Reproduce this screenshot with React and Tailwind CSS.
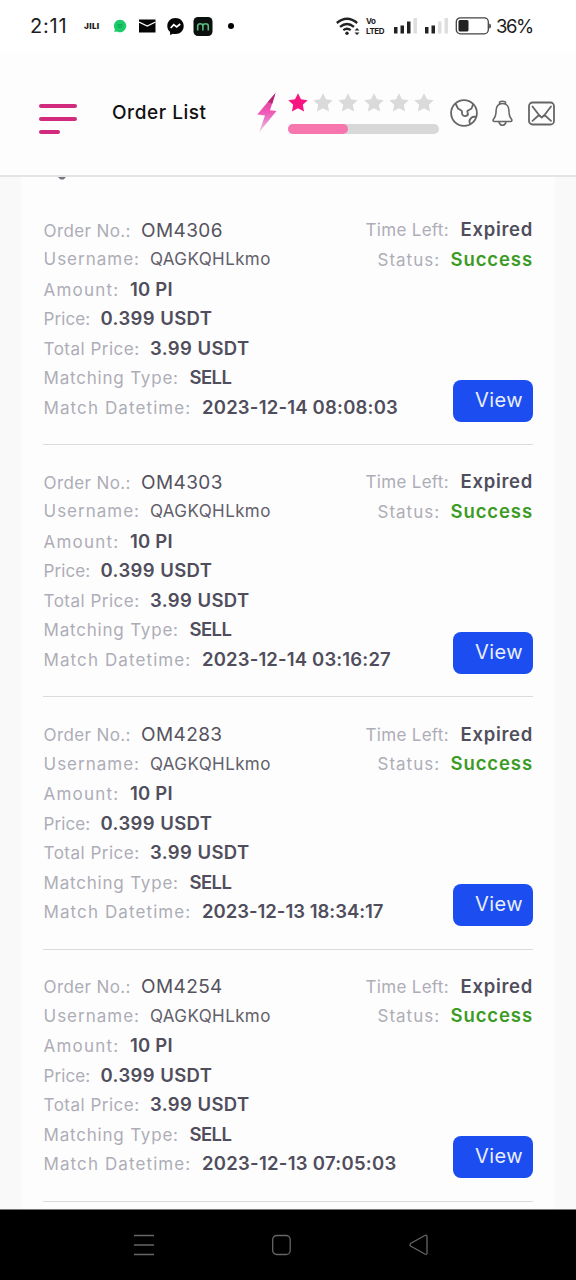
const orders = [
  { no: 'OM4306', datetime: '2023-12-14 08:08:03', dateClass: 'tracking-[0.2px]' },
  { no: 'OM4303', datetime: '2023-12-14 03:16:27', dateClass: 'tracking-[0.15px]' },
  { no: 'OM4283', datetime: '2023-12-13 18:34:17', dateClass: 'tracking-[-0.02px]' },
  { no: 'OM4254', datetime: '2023-12-13 07:05:03', dateClass: 'tracking-[0.27px]' },
];

const STAR_PATH = 'M10 .3l3 6 6.700.9-4.900 4.600 1.300 6.700-6.100-3.200-6.100 3.200 1.300-6.700L.3 7.200 7 6.300z';

function StatusBar() {
  return (
    <div className="flex h-[52px] shrink-0 items-center bg-white pl-[30px] text-[#1c1c1c]">
      <span className="w-[54px] text-[20px] leading-none tracking-[0.8px]">2:11</span>
      <span className="w-[29px] text-[8px] leading-none font-black tracking-[0.4px]">JILI</span>
      <svg width="14" height="14" viewBox="0 0 14 14" className="mr-[12px]">
        <path d="M7 .8a6.200 6.200 0 1 1-3 11.600L1.300 13l.6-2.700A6.200 6.200 0 0 1 7 .8z" fill="#1ccb68" />
        <path d="M4.300 6.200q2.700-1.200 5.400 0M4.700 8.300q2.300-.9 4.300 0" stroke="#0a9b48" fill="none" />
      </svg>
      <svg width="17" height="14" viewBox="0 0 17 14" className="mr-[11px]">
        <path d="M0 .5h16.500v13H0z" fill="#050505" />
        <path d="M0 3l8.250 4L16.500 3" stroke="#fff" strokeWidth="1.300" fill="none" />
      </svg>
      <svg width="17" height="17" viewBox="0 0 17 17" className="mr-[9px]">
        <path d="M8.500 0C3.700 0 .3 3.400.3 7.900c0 2.500 1 4.500 2.700 5.900L3.200 17l2.700-1.300c.8.200 1.700.3 2.600.3 4.800 0 8.200-3.500 8.200-8S13.300 0 8.500 0z" fill="#050505" />
        <path d="M3.700 10l3-3.400 3 2.400 3.500-3" stroke="#fff" strokeWidth="1.700" fill="none" />
      </svg>
      <svg width="20" height="19" viewBox="0 0 20 19" className="mr-[15px]">
        <rect x=".5" width="19" height="19" rx="4.500" fill="#0b0f0d" />
        <path d="M4.700 13.500V9q0-2.300 2.600-2.300T9.900 9v4.500M9.900 9q0-2.300 2.700-2.300T15.300 9v4.500" stroke="#58ba7e" strokeWidth="1.600" fill="none" />
      </svg>
      <span className="mr-[102px] size-[6px] rounded-full bg-black" />

      <svg width="25" height="19" viewBox="0 0 25 19" className="mr-[5px]">
        <g fill="none" stroke="#222" strokeWidth="2.300">
          <path d="M.8 6q10.200-8.600 20.400 0" />
          <path d="M4 9.800q7-5.700 14 0" />
          <path d="M7.300 13.200q3.700-3 7.400 0" />
        </g>
        <circle cx="11" cy="16.300" r="1.700" fill="#222" />
        <path d="M18.500 13.500l2.500-2.500 2.500 2.500zM18.500 15.500h5L21 18z" fill="#222" />
      </svg>
      <span className="mr-[9px] flex w-[18px] flex-col text-[8px] leading-[10px] font-bold tracking-[-0.4px]">
        <span>Vo</span>
        <span>LTED</span>
      </span>
      <SignalBars filled={3} />
      <SignalBars filled={2} />
      <svg width="36" height="18" viewBox="0 0 36 18" className="mr-[5px]">
        <rect x="1.300" y=".8" width="32" height="16" rx="4" fill="none" stroke="#444" strokeWidth="1.300" />
        <rect x="3.500" y="3" width="10" height="11.500" rx="1.500" fill="#222" />
        <path d="M34.200 6.500q1.800 0 1.800 2.500t-1.800 2.500z" fill="#444" />
      </svg>
      <span className="text-[18.5px] leading-none tracking-[-1.4px]">36%</span>
    </div>
  );
}

function SignalBars({ filled }) {
  return (
    <svg width="24" height="16" viewBox="0 0 24 16" className="mr-[7px]">
      {[6.5, 8, 12, 15.5].map((h, i) => (
        <rect key={h} x={i * 6.5 + 1} y={15.5 - h} width="3.500" height={h} fill={i < filled ? '#222' : '#dedede'} />
      ))}
    </svg>
  );
}

function Header() {
  return (
    <header className="flex h-[125px] shrink-0 items-start border-b-2 border-[#e4e4e4] bg-[#fdfdfd] pl-[39px]">
      <div className="mt-[52px] mr-[35px] flex w-[38px] flex-col gap-[9px]">
        <span className="h-1 rounded-full bg-[#d22b7e]" />
        <span className="h-1 rounded-full bg-[#d22b7e]" />
        <span className="h-1 w-[21px] rounded-full bg-[#d22b7e]" />
      </div>
      <h1 className="mt-[48px] w-[144px] text-[19px] leading-[26px] font-medium tracking-[0.55px] whitespace-nowrap text-[#111]">Order List</h1>

      <svg width="22" height="40" viewBox="0 0 22 40" className="mt-[41px] mr-[10px]">
        <defs>
          <linearGradient id="bolt" x1="0" y1="0" x2="0" y2="1">
            <stop offset="0" stopColor="#d0388f" />
            <stop offset=".45" stopColor="#f154b4" />
            <stop offset=".65" stopColor="#e777c4" />
            <stop offset="1" stopColor="#eed6e6" />
          </linearGradient>
        </defs>
        <path d="M19.500 0L1.200 21.500l7.800 1L3 39.500l17.500-21.500-6.500-.7z" fill="url(#bolt)" />
        <path d="M19.500 0L12 8.800l4.300 2z" fill="#b32875" />
      </svg>

      <div className="mt-[41px] mr-[11px] w-[151px]">
        <div className="flex gap-[5.200px]">
          {[0, 1, 2, 3, 4, 5].map((i) => (
            <svg key={i} width="20" height="20" viewBox="0 0 20 20" className="shrink-0">
              <path d={STAR_PATH} fill={i === 0 ? '#f71582' : '#dadada'} />
            </svg>
          ))}
        </div>
        <div className="mt-[11px] h-[10px] rounded-full bg-[#d8d8d8]">
          <div className="h-full w-[60px] rounded-full bg-[#f876ae]" />
        </div>
      </div>

      <div className="mt-[46px] flex h-[30px] items-center text-[#666]">
        <svg width="28" height="28" viewBox="0 0 28 28" fill="none" stroke="currentColor" strokeWidth="1.800" strokeLinejoin="round" className="mr-[14px]">
          <circle cx="14" cy="14" r="12.900" />
          <path d="M5.500 4.500L8 9.500l3.700 2.200.6 3.800q2.300 3 5.700.2l-.7-3.700 4.200-2.500 1.700-4.300M26.500 18q-3.500-.7-5 .7-2.500 2-2 4.300 0 1.500 1.200 2" />
        </svg>
        <svg width="21" height="27" viewBox="0 0 21 27" fill="none" stroke="currentColor" strokeWidth="1.600" strokeLinejoin="round" className="mr-[15px]">
          <path d="M7.500 4V2.600q0-1.300 3-1.300t3 1.300V4M10.500 3.500c-4.200 0-6.400 3-6.400 7 0 4.500-.5 6.300-2.500 8.500-1 1.500-.5 2.500.9 2.500h16c1.400 0 1.900-1 .9-2.500-2-2.200-2.500-4-2.500-8.500 0-4-2.200-7-6.400-7z" />
          <path d="M7 21.500q.7 3.800 3.500 3.800t3.500-3.800" />
        </svg>
        <svg width="28" height="25" viewBox="0 0 28 25" fill="none" stroke="currentColor" strokeWidth="1.800" strokeLinecap="round" strokeLinejoin="round">
          <rect x="1" y="1.500" width="25" height="22" rx="3.500" />
          <path d="M4.500 5.500L11 14l2.700 2.500L16.500 14 23 5.500M4.500 19.800L11 14M23 19.800L16.500 14" />
        </svg>
      </div>
    </header>
  );
}

function Field({ label, labelClass, value, valueClass }) {
  return (
    <div className="flex h-[29.5px] items-baseline whitespace-nowrap leading-[29.5px]">
      <span className={`shrink-0 text-[17px] text-[#adadb7] ${labelClass}`}>{label}</span>
      <span className={valueClass}>{value}</span>
    </div>
  );
}

const strong = 'text-[18.5px] font-semibold text-[#504e5c]';

function Order({ order }) {
  return (
    <article className="mb-[22.25px] flex h-[230px] border-b border-[#dcdcde]">
      <div className="w-0 flex-1 pt-[0.5px] pl-[0.5px]">
        <Field label="Order No.:" labelClass="w-[97.5px] tracking-[0.4px]" value={order.no} valueClass="text-[19px] tracking-[0.4px] text-[#55535e]" />
        <Field label="Username:" labelClass="w-[106.5px] tracking-[1px]" value="QAGKQHLkmo" valueClass="text-[17px] tracking-[0.4px] text-[#62606b]" />
        <Field label="Amount:" labelClass="w-[86.5px] tracking-[1.2px]" value="10 PI" valueClass={`${strong} tracking-[0.2px]`} />
        <Field label="Price:" labelClass="w-[57px] tracking-[0.1px]" value="0.399 USDT" valueClass={`${strong} tracking-[0.4px]`} />
        <Field label="Total Price:" labelClass="w-[106.5px] tracking-[0.5px]" value="3.99 USDT" valueClass={`${strong} tracking-[0.4px]`} />
        <Field label="Matching Type:" labelClass="w-[146px] tracking-[0.8px]" value="SELL" valueClass={`${strong} tracking-[-0.6px]`} />
        <Field label="Match Datetime:" labelClass="w-[158.5px] tracking-[1.1px]" value={order.datetime} valueClass={`${strong} ${order.dateClass}`} />
      </div>
      <div className="flex h-[206.5px] flex-col items-end">
        <Field label="Time Left:" labelClass="w-[95px] tracking-[0.3px]" value="Expired" valueClass={`${strong} tracking-[0.7px]`} />
        <Field label="Status:" labelClass="w-[73px] tracking-[1px]" value="Success" valueClass="text-[18.5px] font-semibold tracking-[0.9px] text-[#3b9b24]" />
        <button type="button" className="mt-auto h-[42px] w-[80px] rounded-[8px] bg-[#1b4df0] pr-[10px] pb-[2px] text-right text-[20px] tracking-[0.4px] text-[#e9eeff]">
          View
        </button>
      </div>
    </article>
  );
}

function NavBar() {
  return (
    <nav className="flex h-[71px] shrink-0 items-center border-t border-[#777] bg-black pl-[134px] text-[#666]">
      <svg width="20" height="22" viewBox="0 0 20 22" stroke="currentColor" strokeWidth="1.500" className="mr-[117px]">
        <path d="M0 1.500h20M0 11h20M0 20.500h20" />
      </svg>
      <svg width="22" height="22" viewBox="0 0 22 22" fill="none" stroke="currentColor" strokeWidth="1.300" className="mr-[116px]">
        <rect x="1.700" y="1.500" width="17.500" height="19" rx="4" />
      </svg>
      <svg width="20" height="22" viewBox="0 0 20 22" fill="none" stroke="currentColor" strokeWidth="1.300" strokeLinejoin="round">
        <path d="M1.500 9.500Q.5 11 1.500 12l14.300 8q2.200 1 2.200-1V2.500q0-2-2.200-1z" />
      </svg>
    </nav>
  );
}

export default function App() {
  return (
    <div className="flex h-[1280px] w-[576px] flex-col overflow-hidden bg-[#f9f9f9] font-['Inter','Noto_Sans',sans-serif]">
      <StatusBar />
      <Header />
      <main className="min-h-0 flex-1 overflow-hidden px-[21px]">
        <div className="h-[1040px] bg-[#fdfdfd] px-[22px]">
          {/* descender of the heading scrolled under the header */}
          <div className="h-[38px] pl-[15px]">
            <svg width="8" height="3" viewBox="0 0 8 3">
              <path d="M0 0h8L5.500 2.500h-3z" fill="#77757f" />
            </svg>
          </div>
          {orders.map((order) => (
            <Order key={order.no} order={order} />
          ))}
        </div>
      </main>
      <NavBar />
    </div>
  );
}
